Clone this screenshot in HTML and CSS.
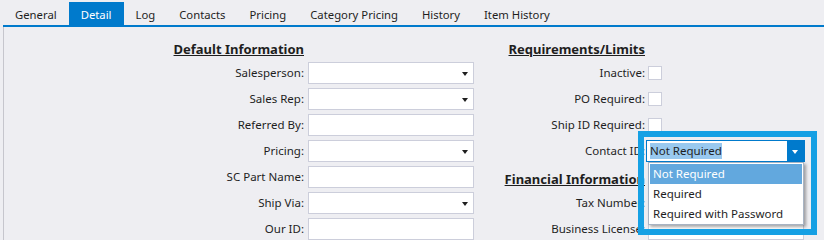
FILE: index.html
```html
<!DOCTYPE html>
<html lang="en">
<head>
    <meta charset="UTF-8">
    <title>Customer Detail</title>
    <link rel="stylesheet" href="styles.css">
</head>
<body>
    <div class="tabs">
        <span class="tab">General</span>
        <span class="tab active">Detail</span>
        <span class="tab">Log</span>
        <span class="tab">Contacts</span>
        <span class="tab">Pricing</span>
        <span class="tab">Category Pricing</span>
        <span class="tab">History</span>
        <span class="tab">Item History</span>
    </div>

    <div class="panel">
        <div class="section left">
            <div class="head">Default Information</div><div></div>
            <label>Salesperson:</label><div class="combo"><span class="arrow"></span></div>
            <label>Sales Rep:</label><div class="combo"><span class="arrow"></span></div>
            <label>Referred By:</label><div class="field"></div>
            <label>Pricing:</label><div class="combo"><span class="arrow"></span></div>
            <label>SC Part Name:</label><div class="field"></div>
            <label>Ship Via:</label><div class="combo"><span class="arrow"></span></div>
            <label>Our ID:</label><div class="field"></div>
        </div>

        <div class="section right">
            <div class="head">Requirements/Limits</div><div></div>
            <label>Inactive:</label><div><span class="check"></span></div>
            <label>PO Required:</label><div><span class="check"></span></div>
            <label>Ship ID Required:</label><div><span class="check"></span></div>
            <label>Contact ID:</label>
            <div class="combo focused"><span class="sel">Not Required</span><span class="arrow"></span></div>
            <div class="head">Financial Information</div><div></div>
            <label>Tax Number:</label><div class="field"></div>
            <label>Business License:</label><div class="field"></div>
        </div>

        <!-- open dropdown of Contact ID -->
        <div class="popup">
            <div class="item hot">Not Required</div>
            <div class="item">Required</div>
            <div class="item">Required with Password</div>
        </div>

        <!-- highlight frame drawn over the screenshot -->
        <div class="callout"></div>
    </div>
</body>
</html>
```

FILE: styles.css
```css
body {
    margin: 0;
    background: #eeeef2;
    color: #1e1e1e;
    font-family: "Noto Sans", "Open Sans", sans-serif;
    font-size: 11.5px;
    width: 824px;
    height: 240px;
    overflow: hidden;
}
.tabs {
    display: flex;
    margin-left: 3px;
    height: 25px;
    border-bottom: 2px solid #007acc;
    font-size: 11.3px;
}
.tab {
    margin-top: 2px;
    height: 21px;
    padding: 2px 12px 0;
    line-height: 21px;
    white-space: nowrap;
}
.tab.active {
    background: #007acc;
    color: white;
}
.panel {
    position: relative;
    display: flex;
    margin-left: 3px;
    border-left: 1px solid #c6c6cd;
    padding-top: 9px;
    height: 204px;
}
.section {
    display: grid;
    grid-auto-rows: 22px;
    row-gap: 4px;
    align-items: center;
}
.section.left {
    grid-template-columns: 300px 166px;
    column-gap: 4px;
}
.section.right {
    grid-template-columns: 171px 156px;
    column-gap: 3px;
}
.head {
    justify-self: end;
    align-self: end;
    font-weight: bold;
    font-size: 13px;
    text-decoration: underline;
    line-height: 18px;
    white-space: nowrap;
}
label {
    text-align: right;
    white-space: nowrap;
    line-height: 22px;
}
.field, .combo {
    position: relative;
    box-sizing: border-box;
    height: 22px;
    background: white;
    border: 1px solid #cccedb;
}
.arrow {
    position: absolute;
    right: 5px;
    top: 9px;
    border-left: 3.5px solid transparent;
    border-right: 3.5px solid transparent;
    border-top: 4px solid #1e1e1e;
}
.check {
    display: block;
    box-sizing: border-box;
    width: 14px;
    height: 14px;
    background: white;
    border: 1px solid #cccedb;
}
.combo.focused {
    margin-left: -2px;
    width: 159px;
    border-color: #007acc;
    padding: 2px 0 0 3px;
}
.combo.focused .sel {
    background: #99c9ef;
    line-height: 16px;
    display: inline-block;
}
.combo.focused .arrow {
    right: 0;
    top: 0;
    width: 17px;
    height: 20px;
    border: none;
    background: #007acc;
}
.combo.focused .arrow::after {
    content: "";
    position: absolute;
    left: 5px;
    top: 9px;
    border-left: 3.5px solid transparent;
    border-right: 3.5px solid transparent;
    border-top: 4px solid white;
}
.popup {
    position: absolute;
    left: 644px;
    top: 135px;
    width: 156px;
    height: 63px;
    box-sizing: border-box;
    background: white;
    border: 1px solid #a8b4c4;
    padding: 1px;
    box-shadow: 2px 2px 3px rgba(0, 0, 0, 0.35);
}
.item {
    height: 20px;
    line-height: 20px;
    padding-left: 3px;
    white-space: nowrap;
}
.item.hot {
    background: #62a8de;
    color: white;
}
.callout {
    position: absolute;
    left: 634px;
    top: 104px;
    width: 167px;
    height: 92px;
    border: 6px solid #15a0e4;
}
```
